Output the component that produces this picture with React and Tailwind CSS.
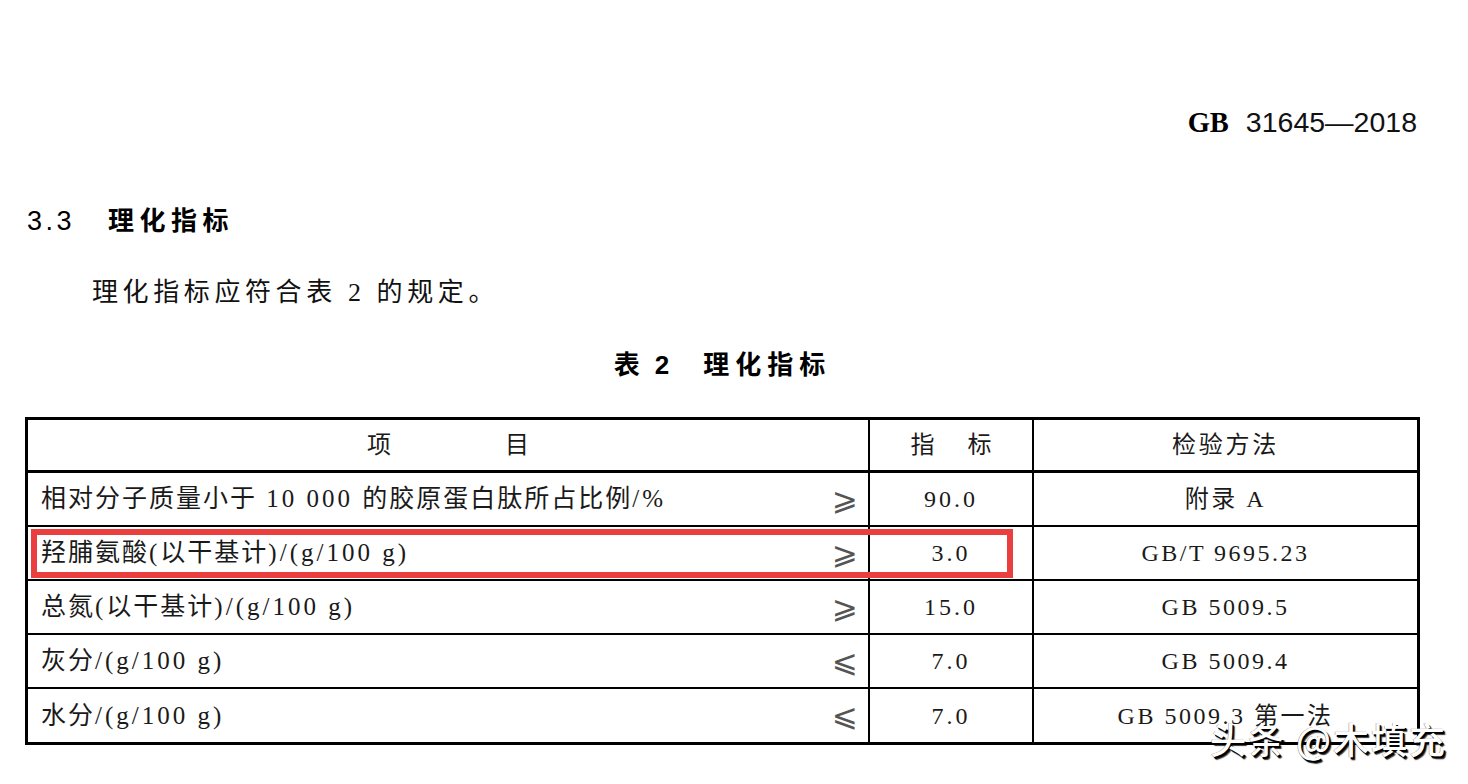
const serif = 'font-["Liberation_Serif","Noto_Sans_CJK_SC",serif]';
const hei = 'font-["Liberation_Sans","Noto_Sans_CJK_SC",sans-serif]';

const rows = [
  { item: '相对分子质量小于 10 000 的胶原蛋白肽所占比例/%', op: '⩾', value: '90.0', method: '附录 A' },
  { item: '羟脯氨酸(以干基计)/(g/100 g)', op: '⩾', value: '3.0', method: 'GB/T 9695.23' },
  { item: '总氮(以干基计)/(g/100 g)', op: '⩾', value: '15.0', method: 'GB 5009.5' },
  { item: '灰分/(g/100 g)', op: '⩽', value: '7.0', method: 'GB 5009.4' },
  { item: '水分/(g/100 g)', op: '⩽', value: '7.0', method: 'GB 5009.3 第一法' },
];

// CJK runs and Latin runs get their own spacing, like the PDF rendering
function Mixed({ text }) {
  const parts = text.match(/[\u3000-\u9fff\uff00-\uffef]+|[^\u3000-\u9fff\uff00-\uffef]+/g) || [];
  return parts.map((p, i) =>
    /[\u3000-\u9fff\uff00-\uffef]/.test(p) ? (
      <span key={i} className="tracking-[2px]">{p}</span>
    ) : (
      <span key={i} className="tracking-[3px]">{p}</span>
    )
  );
}

function Row({ row, last }) {
  return (
    <div
      className={
        'grid grid-cols-[842px_164px_1fr] ' +
        (last ? 'h-[53px]' : 'h-[54px] border-b-2 border-black')
      }
    >
      <div className="flex items-center justify-between border-r-2 border-black pl-[13px] pr-[10px]">
        <span className="text-[25px] text-[#1a1a1a] whitespace-pre">
          <Mixed text={row.item} />
        </span>
        <span className='font-["DejaVu_Sans",sans-serif] text-[31px] leading-none text-[#555]'>{row.op}</span>
      </div>
      <div className="flex items-center justify-center border-r-2 border-black text-[24px] tracking-[3px] text-[#1a1a1a]">
        {row.value}
      </div>
      <div className="flex items-center justify-center text-[24px] tracking-[2.5px] text-[#1a1a1a]">
        {row.method}
      </div>
    </div>
  );
}

export default function App() {
  return (
    <div className={'relative w-[1468px] h-[784px] overflow-hidden bg-white text-black ' + serif}>
      <div className={'flex justify-end items-baseline gap-[17px] pt-[106px] pr-[51px] leading-[32px] ' + hei}>
        <span className='font-["Liberation_Serif",serif] font-bold text-[28.5px]'>GB</span>
        <span className="text-[28.5px] text-[#111]">31645—2018</span>
      </div>

      <div className={'mt-[66px] ml-[27px] flex items-center gap-[33px] h-[32px] ' + hei}>
        <span className="text-[27px] tracking-[3.5px]">3.3</span>
        <span className="text-[26px] font-bold tracking-[5.5px]">理化指标</span>
      </div>

      <p className="mt-[40px] ml-[92px] h-[32px] leading-[32px] text-[26px] tracking-[4.6px] text-[#111]">
        理化指标应符合表 2 的规定。
      </p>

      <div className={'mt-[40px] w-[1395px] ml-[25px] h-[32px] flex items-center justify-center gap-[30px] ' + hei}>
        <span className="text-[26px] font-bold tracking-[4px]">表 2</span>
        <span className="text-[26px] font-bold tracking-[6px]">理化指标</span>
      </div>

      <div className="relative mt-[36px] ml-[25px] w-[1395px]">
        <div className="border-[3px] border-black">
          <div className="grid grid-cols-[842px_164px_1fr] h-[53px] border-b-[3px] border-black text-[24px] text-[#1a1a1a]">
            <div className="flex items-center justify-center gap-[114px] border-r-2 border-black">
              <span>项</span>
              <span>目</span>
            </div>
            <div className="flex items-center justify-center gap-[33px] border-r-2 border-black">
              <span>指</span>
              <span>标</span>
            </div>
            <div className="flex items-center justify-center tracking-[2.7px]">检验方法</div>
          </div>
          {rows.map((row, i) => (
            <Row key={i} row={row} last={i === rows.length - 1} />
          ))}
        </div>

        <div className="absolute left-[6px] top-[112px] w-[982px] h-[49px] border-[6px] border-[#eb3f3f]" />
      </div>

      <div className='absolute left-[1210px] top-[720px] font-["Noto_Sans_CJK_SC",sans-serif] font-medium text-[36px] leading-none tracking-[2px] text-white [text-shadow:1.5px_1.5px_0_#000,2.5px_2.5px_1px_rgba(0,0,0,0.8),-0.5px_-0.5px_0_rgba(0,0,0,0.5)]'>
        头条 @木填充
      </div>
    </div>
  );
}
